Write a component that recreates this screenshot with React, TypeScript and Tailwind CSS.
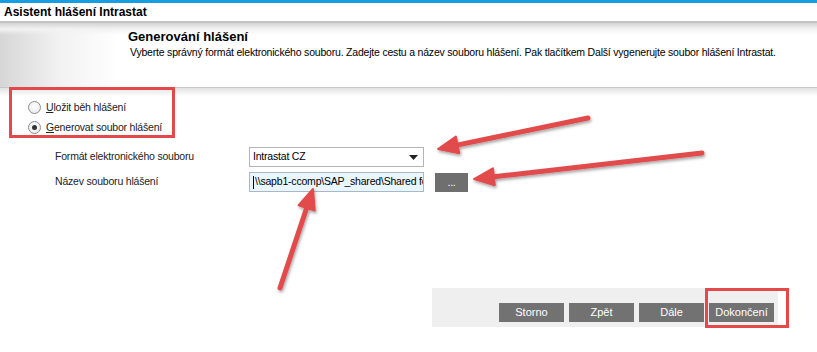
import React from "react";

type Pt = [number, number];

function Arrow({ from, to }: { from: Pt; to: Pt }) {
  const dx = to[0] - from[0];
  const dy = to[1] - from[1];
  const len = Math.hypot(dx, dy);
  const ux = dx / len;
  const uy = dy / len;
  const hl = 20;
  const hw = 8.5;
  const bx = to[0] - ux * hl;
  const by = to[1] - uy * hl;
  const nx = -uy;
  const ny = ux;
  const p1 = `${to[0]},${to[1]}`;
  const p2 = `${bx + nx * hw},${by + ny * hw}`;
  const p3 = `${bx - nx * hw},${by - ny * hw}`;
  return (
    <g>
      <line x1={from[0]} y1={from[1]} x2={bx + ux * 2} y2={by + uy * 2} stroke="#e24b4b" strokeWidth={5} strokeLinecap="round" />
      <polygon points={`${p1} ${p2} ${p3}`} fill="#e24b4b" stroke="#e24b4b" strokeWidth={2} strokeLinejoin="round" />
    </g>
  );
}

function Radio({ checked }: { checked?: boolean }) {
  return (
    <span className="w-[13px] h-[13px] rounded-full border border-[#8c8c8c] bg-[radial-gradient(circle_at_50%_40%,#ffffff,#e6e6e6)] flex items-center justify-center shrink-0">
      {checked && <span className="w-[5px] h-[5px] rounded-full bg-[#333]" />}
    </span>
  );
}

export default function App() {
  return (
    <div className="relative w-[817px] h-[352px] bg-white overflow-hidden text-[10.5px] tracking-[-0.2px] text-[#222] font-['Liberation_Sans',Arial,sans-serif]">
      <div className="h-[3px] bg-[#1a9de0]" />
      <div className="h-[18px] flex items-center pl-[4px] font-bold text-[12px] tracking-normal text-black">
        Asistent hlášení Intrastat
      </div>
      <div className="h-[2px] bg-[#c4c4c4]" />
      <div className="h-[64px] bg-[linear-gradient(to_bottom,#d4d4d4_0px,#f2f2f2_6px,rgba(255,255,255,0)_12px),linear-gradient(to_right,#d6d6d6_0px,#f2f2f2_60px,#ffffff_120px)] pl-[128px] pt-[6px]">
        <div className="font-bold text-[13px] tracking-normal text-black leading-[16px]">Generování hlášení</div>
        <div className="pl-[2px] leading-[14px] text-black whitespace-nowrap">
          Vyberte správný formát elektronického souboru. Zadejte cestu a název souboru hlášení. Pak tlačítkem Další vygenerujte soubor hlášení Intrastat.
        </div>
      </div>
      <div className="h-[1px] bg-[#c8c8c8]" />
      <div className="h-[8px] bg-[linear-gradient(to_bottom,#e2e2e2,#ffffff)]" />

      <div className="pl-[28px] pt-[5px] flex flex-col gap-[7px]">
        <label className="flex items-center gap-[5px] h-[13px]">
          <Radio />
          <span>
            <span className="underline">U</span>ložit běh hlášení
          </span>
        </label>
        <label className="flex items-center gap-[5px] h-[13px]">
          <Radio checked />
          <span>
            <span className="underline">G</span>enerovat soubor hlášení
          </span>
        </label>
      </div>

      <div className="pl-[55px] pt-[13px] flex flex-col gap-[5px]">
        <div className="flex items-center h-[20px]">
          <div className="w-[194px]">Formát elektronického souboru</div>
          <div className="w-[175px] h-[20px] border border-[#b5b5b5] bg-white flex items-center pl-[3px] pr-[5px] justify-between">
            <span className="text-black">Intrastat CZ</span>
            <svg width="9" height="5" viewBox="0 0 9 5">
              <polygon points="0,0 9,0 4.5,5" fill="#222" />
            </svg>
          </div>
        </div>
        <div className="flex items-center h-[20px]">
          <div className="w-[194px]">Název souboru hlášení</div>
          <div className="w-[175px] h-[20px] border border-[#a8b8c8] bg-[#eaf6fd] flex items-center pl-[3px]">
            <span className="w-[1px] h-[13px] bg-black mr-[1px] shrink-0" />
            <span className="flex-1 min-w-0 overflow-hidden whitespace-nowrap text-black">\\sapb1-ccomp\SAP_shared\Shared fo</span>
          </div>
          <div className="ml-[11px] w-[33px] h-[19px] bg-[#6f6f6f] text-white flex items-center justify-center leading-none">
            ...
          </div>
        </div>
      </div>

      <div className="ml-[432px] mt-[96px] w-[346px] h-[39px] bg-[#efefef] flex items-end justify-end gap-[5px] pr-[4px] pb-[5px]">
        {["Storno", "Zpět", "Dále", "Dokončení"].map((t) => (
          <div key={t} className="w-[65px] h-[19px] bg-[#727272] text-white flex items-center justify-center text-[11px] tracking-normal">
            {t}
          </div>
        ))}
      </div>

      <div className="absolute left-[9px] top-[87px] w-[166px] h-[51px] border-[3px] border-[#e5484a]" />
      <div className="absolute left-[705px] top-[288px] w-[84px] h-[40px] border-[3px] border-[#e5484a]" />

      <svg className="absolute left-0 top-0 pointer-events-none" width="817" height="352" viewBox="0 0 817 352">
        <defs>
          <filter id="sh" x="-20%" y="-20%" width="140%" height="140%">
            <feDropShadow dx="1" dy="2" stdDeviation="1.5" floodColor="#000" floodOpacity="0.35" />
          </filter>
        </defs>
        <g filter="url(#sh)">
          <Arrow from={[588, 118]} to={[438, 149]} />
          <Arrow from={[702, 153]} to={[474, 179]} />
          <Arrow from={[280, 288]} to={[313, 189]} />
        </g>
      </svg>
    </div>
  );
}
